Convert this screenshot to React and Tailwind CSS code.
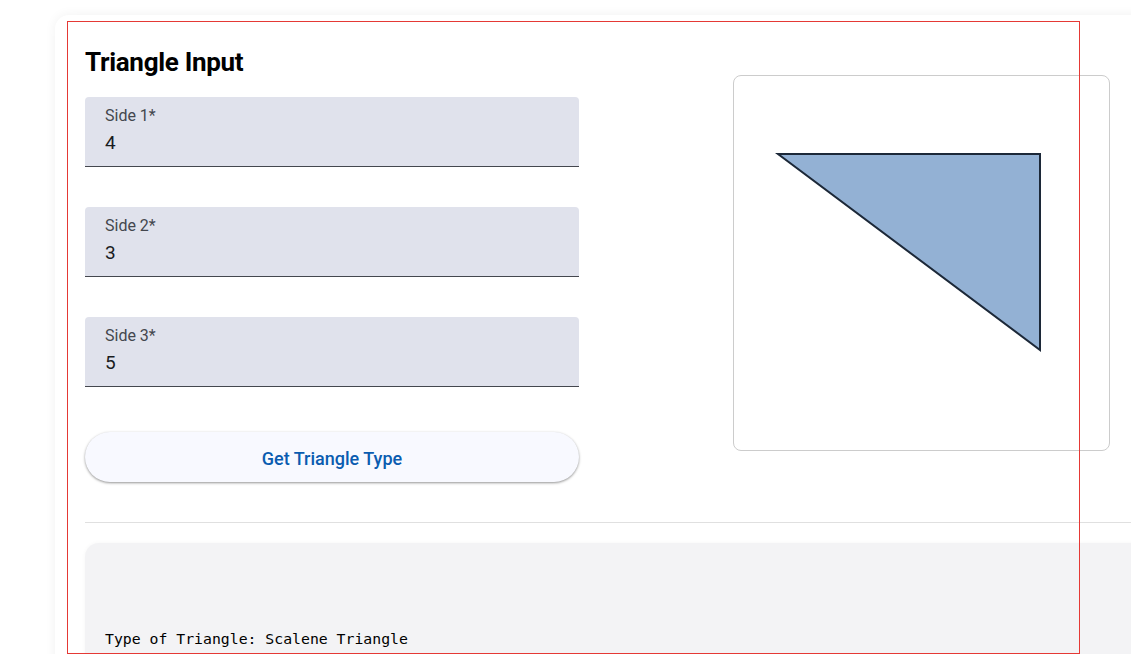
import React from "react";

function Field({ label, value }) {
  return (
    <div className="h-[70px] rounded-t-[4px] bg-[#e0e2ec] border-b border-[#44474e] pl-[20px] pt-[9px]">
      <div className="text-[16px] leading-[20px] text-[#44474e]">{label}</div>
      <div className="text-[19px] leading-[26px] text-[#1a1c1e] mt-[4px]">{value}</div>
    </div>
  );
}

export default function App() {
  return (
    <div className="relative w-[1131px] h-[654px] overflow-hidden bg-white" style={{ fontFamily: "Roboto, 'Noto Sans', sans-serif" }}>
      <div className="ml-[55px] mt-[15px] w-[1120px] rounded-[14px] bg-white shadow-[0_0_12px_rgba(0,0,0,0.06)] pl-[30px] pt-[30px]">
        <div className="flex">
          <div className="w-[494px]">
            <h2 className="text-[26px] leading-[34px] font-bold text-black tracking-[-0.3px]">Triangle Input</h2>
            <div className="mt-[18px] flex flex-col gap-[40px]">
              <Field label="Side 1*" value="4" />
              <Field label="Side 2*" value="3" />
              <Field label="Side 3*" value="5" />
            </div>
            <button className="mt-[45px] w-full h-[50px] pt-[3px] rounded-full bg-[#f8f9ff] shadow-[0_1px_3px_rgba(0,0,0,0.3),0_1px_2px_rgba(0,0,0,0.15)] text-[18px] font-medium text-[#0a5cb0]">
              Get Triangle Type
            </button>
          </div>
          <div className="ml-[154px] mt-[30px] w-[377px] h-[376px] rounded-[8px] border border-[#cccccc] bg-white">
            <svg width="377" height="376" viewBox="0 0 377 376">
              <polygon points="44,78 306,78 306,274" fill="#93b1d4" stroke="#1c2838" strokeWidth="2" />
            </svg>
          </div>
        </div>
        <div className="mt-[40px] h-px bg-[#e0e0e0]" />
        <div className="mt-[20px] h-[140px] rounded-tl-[14px] bg-[#f3f3f5] shadow-[0_0_4px_rgba(0,0,0,0.04)] pl-[20px] pt-[86px]">
          <pre className="text-[14.8px] leading-[20px] text-black" style={{ fontFamily: "'DejaVu Sans Mono', monospace" }}>Type of Triangle: Scalene Triangle</pre>
        </div>
      </div>
      <div className="absolute left-[67px] top-[21px] w-[1013px] h-[633px] border-[1.5px] border-[#e53935] pointer-events-none" />
    </div>
  );
}
